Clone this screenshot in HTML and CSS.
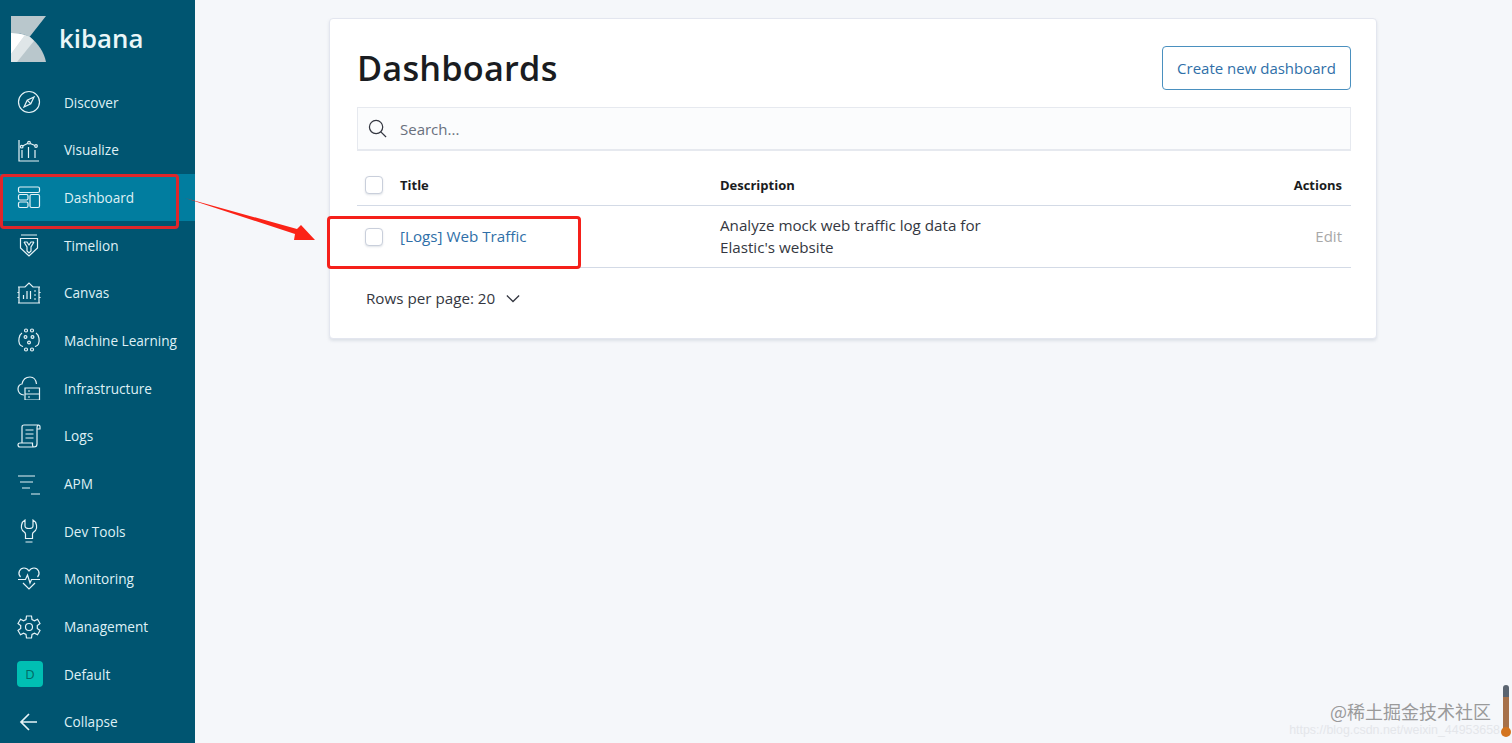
FILE: index.html
```html
<!DOCTYPE html>
<html lang="en">
<head>
<meta charset="utf-8">
<title>Dashboards - Kibana</title>
<link rel="stylesheet" href="styles.css">
</head>
<body>
<div class="app">
  <nav class="sidebar">
    <div class="brand">
      <svg class="logo" viewBox="0 0 35 46" width="35" height="46">
        <path d="M0 0H35L18.700 20.700C13 18 7 17 0 17Z" fill="#b9c7cc"/>
        <path d="M0 17C7 17 13 18 18.700 20.700C27 27 33 36 35 46H0Z" fill="#b9c7cc"/>
        <path d="M14 19C16 19.500 17.500 20 18.700 20.700L23 25L6 46H0V38Z" fill="#dfe6e8"/>
        <path d="M0 17C5 17 10 17.700 14 19L0 38Z" fill="#ffffff"/>
      </svg>
      <span class="brand-name">kibana</span>
    </div>
    <ul class="nav">
      <li class="nav-item"><span class="nav-icon"><svg viewBox="0 0 24 24" class="ico"><circle cx="12" cy="12" r="10.500"/><path d="M17 7L13.800 13.800L7 17L10.200 10.200Z M10.200 10.200L13.800 13.800"/></svg></span><span>Discover</span></li>
      <li class="nav-item"><span class="nav-icon"><svg viewBox="0 0 24 24" class="ico"><path d="M2 2V23H22M5 12V20M11.500 9V20M18 12V20M5.500 8L11 5.300M13.200 5.500L18 7.500"/><circle cx="4.700" cy="8.700" r="1.300"/><circle cx="12" cy="4.700" r="1.300"/><circle cx="19" cy="8" r="1.300"/></svg></span><span>Visualize</span></li>
      <li class="nav-item active"><span class="nav-icon"><svg viewBox="0 0 24 24" class="ico"><rect x="1.500" y="2" width="21" height="5.500" rx="1.500"/><rect x="1.500" y="9.500" width="9.500" height="5.500" rx="1.500"/><rect x="1.500" y="17" width="9.500" height="5.500" rx="1.500"/><rect x="13" y="9.500" width="9.500" height="13" rx="1.500"/></svg></span><span>Dashboard</span></li>
      <li class="nav-item"><span class="nav-icon"><svg viewBox="0 0 24 24" class="ico"><path d="M4 2H20M3.500 5.500H20.500V15L12 23L3.500 15ZM7 9L10 14V18L12 20L14 18V14L17 9M7 9H10L12 12L14 9H17"/></svg></span><span>Timelion</span></li>
      <li class="nav-item"><span class="nav-icon"><svg viewBox="0 0 24 24" class="ico"><path d="M2 6H8L12 2L16 6H22V22H2ZM1 6H3M21 6H23M1 22H3M21 22H23M1 11V12M23 11V12M1 16V17M23 16V17M6.500 18V14M10 18V10M13.500 18V10M17 10H19M17 14H19M17 18H19"/></svg></span><span>Canvas</span></li>
      <li class="nav-item"><span class="nav-icon"><svg viewBox="0 0 24 24" class="ico"><circle cx="9" cy="2.500" r="1.500"/><circle cx="15" cy="2.500" r="1.500"/><circle cx="9" cy="21.500" r="1.500"/><circle cx="15" cy="21.500" r="1.500"/><circle cx="8.500" cy="9" r="1.400"/><circle cx="15.500" cy="9" r="1.400"/><circle cx="12" cy="14.500" r="1.400"/><path d="M5 5C2 7 1 13 2.500 16C3.500 18 5 18 6 18.500M19 5C22 7 23 13 21.500 16C20.500 18 19 18 18 18.500"/></svg></span><span>Machine Learning</span></li>
      <li class="nav-item"><span class="nav-icon"><svg viewBox="0 0 24 24" class="ico"><path d="M7 19C3 19 1 16 1 13C1 10 3 8 5 8C6 3 9 1 13 1C16.500 1 19 4 19.500 8M8 12H22.500V24H8ZM8 18H22.500M11 15H13M11 21H13"/></svg></span><span>Infrastructure</span></li>
      <li class="nav-item"><span class="nav-icon"><svg viewBox="0 0 24 24" class="ico"><path d="M5 19V3C5 1.800 6 1 7 1H22C21 1 20 1.500 20 4V20C20 22 18.500 23 17 23H3C1.500 23 1 22 1 20.500C1 19.500 1.500 19 3 19H15.500V21C15.500 22 16 23 17 23M20 5H23V3C23 2 22.500 1 21.500 1M8.500 6H16.500M8.500 10H16.500M8.500 14H16.500"/></svg></span><span>Logs</span></li>
      <li class="nav-item"><span class="nav-icon"><svg viewBox="0 0 24 24" class="ico"><path d="M1 4H18M3 10H16M5 16H13M14 22H23"/></svg></span><span>APM</span></li>
      <li class="nav-item"><span class="nav-icon"><svg viewBox="0 0 24 24" class="ico"><path d="M8 1C4 3 3.500 9 5.500 11.500C7 13 8.500 13 8.500 15V19.500H15.500V15C15.500 13 17 13 18.500 11.500C20.500 9 20 3 16 1V7C16 8.500 14 9.500 12 9.500C10 9.500 8 8.500 8 7ZM8.500 23H15.500"/></svg></span><span>Dev Tools</span></li>
      <li class="nav-item"><span class="nav-icon"><svg viewBox="0 0 24 24" class="ico"><path d="M3.500 10C0 6 3 1 7 1C9.500 1 11 2.500 12 4C13 2.500 14.500 1 17 1C21 1 24 6 20.500 10M1 12.500H8.500L10.500 8L13 16L14.500 12.500H23M6 16L12 22L18 16"/></svg></span><span>Monitoring</span></li>
      <li class="nav-item"><span class="nav-icon"><svg viewBox="0 0 24 24" class="ico"><circle cx="12" cy="12" r="3.500"/><path d="M9.500 1H14.500L15 4.500L17.500 5.800L20.500 4.200L23 8.500L20.300 10.500V13.500L23 15.500L20.500 19.800L17.500 18.200L15 19.500L14.500 23H9.500L9 19.500L6.500 18.200L3.500 19.800L1 15.500L3.700 13.500V10.500L1 8.500L3.500 4.200L6.500 5.800L9 4.500Z"/></svg></span><span>Management</span></li>
      <li class="nav-item"><span class="nav-icon"><span class="avatar">D</span></span><span>Default</span></li>
      <li class="nav-item"><span class="nav-icon"><svg viewBox="0 0 24 24" class="ico arrow"><path d="M20 12H5M12 4L4 12L12 20"/></svg></span><span>Collapse</span></li>
    </ul>
  </nav>
  <main class="content">
    <section class="card">
      <header class="card-head">
        <h1 class="title">Dashboards</h1>
        <button class="create-btn" type="button">Create new dashboard</button>
      </header>
      <div class="search">
        <svg class="search-ico" viewBox="0 0 20 20" width="19" height="19"><circle cx="8.500" cy="8.500" r="7"/><path d="M13.500 13.500L19 19"/></svg>
        <span>Search...</span>
      </div>
      <div class="row head-row">
        <span class="check"></span>
        <span class="col-title">Title</span>
        <span class="col-desc">Description</span>
        <span class="col-act">Actions</span>
      </div>
      <div class="row body-row">
        <span class="check check-up"></span>
        <a class="col-title link">[Logs] Web Traffic</a>
        <span class="col-desc">Analyze mock web traffic log data for Elastic's website</span>
        <span class="col-act edit">Edit</span>
      </div>
      <div class="pager">
        <span>Rows per page: 20</span>
        <svg viewBox="0 0 16 10" width="14" height="9" class="chev"><path d="M1 1.500L8 8.500L15 1.500"/></svg>
      </div>
    </section>
  </main>
</div>

<div class="mark mark-nav"></div>
<div class="mark mark-row"></div>
<svg class="arrow-mark" viewBox="0 0 140 50" width="140" height="50"><path d="M1 1L113 32L117 28L131 43L110 43L111 37Z" fill="#fb2317"/></svg>

<div class="watermark">
  <span class="wm-main">@稀土掘金技术社区</span>
  <span class="wm-url">https://blog.csdn.net/weixin_44953658</span>
</div>
<svg class="thermo" viewBox="0 0 12 60" width="12" height="60"><rect x="3" y="2" width="6" height="50" rx="3" fill="#5b6470"/><rect x="3" y="14" width="6" height="38" fill="#a7714a"/><circle cx="6" cy="49" r="5" fill="#d4741f"/></svg>
</body>
</html>
```

FILE: styles.css
```css
* { box-sizing: border-box; }
html, body { margin: 0; height: 100%; overflow: hidden; }
body { font-family: "Open Sans", "Noto Sans", sans-serif; background: #f5f7fa; color: #343741; }
.app { display: flex; height: 743px; }

.sidebar { width: 195px; flex: none; background: #005571; color: #e6f3f7; }
.brand { height: 78.200px; padding: 16px 0 0 11px; display: flex; align-items: flex-start; gap: 13px; }
.logo { flex: none; }
.brand-name { font-size: 25.800px; line-height: 44px; font-weight: 600; color: #eaf6f8; }
.nav { list-style: none; margin: 0; padding: 0; }
.nav-item { height: 47.690px; display: flex; align-items: center; font-size: 13.600px; color: #dff0f5; }
.nav-item.active { background: #017d9f; }
.nav-icon { width: 64px; padding-left: 17px; flex: none; display: flex; align-items: center; }
.ico { width: 24px; height: 24px; fill: none; stroke: #e6f3f7; stroke-width: 1.200; }
.arrow { stroke-width: 1.700; }
.avatar { width: 26px; height: 26px; border-radius: 4px; background: #00bfb3; color: #006b66; font-size: 13px; display: flex; align-items: center; justify-content: center; }

.content { flex: 1; padding: 18px 0 0 134px; }
.card { width: 1048px; height: 321px; background: #fff; border: 1px solid #e3e6ef; border-radius: 4px; box-shadow: 0 2px 3px rgba(152,162,179,.25); padding: 27px 25px 0 27px; }
.card-head { display: flex; justify-content: space-between; align-items: flex-start; height: 61px; }
.title { margin: 0; font-size: 34.300px; line-height: 44px; font-weight: 600; color: #1a1c21; letter-spacing: .2px; }
.create-btn { width: 189px; height: 44px; background: #fff; border: 1px solid #4a90bf; border-radius: 4px; color: #2f6fa8; font: 15px "Open Sans", sans-serif; padding: 0; }
.search { height: 44px; display: flex; align-items: center; gap: 13px; padding-left: 10px; background: #fbfcfd; border: 1px solid #e6e9ef; border-bottom-width: 2px; color: #69707d; font-size: 15px; }
.search-ico { fill: none; stroke: #343741; stroke-width: 1.300; }
.row { display: flex; align-items: center; padding-left: 8px; }
.head-row { margin-top: 14px; height: 41px; border-bottom: 1px solid #d3dae6; font-size: 13px; font-weight: 700; color: #1a1c21; }
.body-row { height: 62px; padding-bottom: 2px; border-bottom: 1px solid #d3dae6; font-size: 15.200px; }
.check { width: 18px; height: 18px; flex: none; border: 1px solid #c9cfdb; border-radius: 4px; background: #fff; box-shadow: 0 1px 2px rgba(152,162,179,.3); margin-right: 17px; }
.check-up { align-self: flex-start; margin-top: 22px; }
.col-title { width: 320px; flex: none; }
.col-desc { width: 290px; flex: none; line-height: 22px; }
.col-act { margin-left: auto; padding-right: 9px; }
.link { color: #2f6fa8; align-self: flex-start; padding-top: 19px; line-height: 22px; }
.edit { color: #a8a8a8; align-self: flex-start; padding-top: 19px; line-height: 22px; font-size: 15px; }
.pager { display: flex; align-items: center; gap: 11px; padding: 19px 0 0 9px; font-size: 15.200px; line-height: 22px; }
.chev { fill: none; stroke: #343741; stroke-width: 1.500; }

.mark { position: absolute; border: 3px solid #ee2a24; border-radius: 4px; }
.mark-nav { left: 0; top: 174px; width: 179px; height: 55px; border-color: #e0262a; }
.mark-row { left: 327px; top: 216px; width: 254px; height: 53px; border-color: #f5201a; }
.arrow-mark { position: absolute; left: 184px; top: 197px; }

.wm-main { position: absolute; right: 21px; top: 700px; font-size: 18px; line-height: 22px; color: #9a9a9a; font-family: "Noto Sans CJK SC", "Noto Sans", sans-serif; white-space: nowrap; }
.wm-url { position: absolute; right: 12px; top: 722px; font-size: 12.400px; line-height: 16px; color: #e4e6ea; font-family: "Liberation Sans", sans-serif; white-space: nowrap; }
.thermo { position: absolute; left: 1500px; top: 683px; }
```
